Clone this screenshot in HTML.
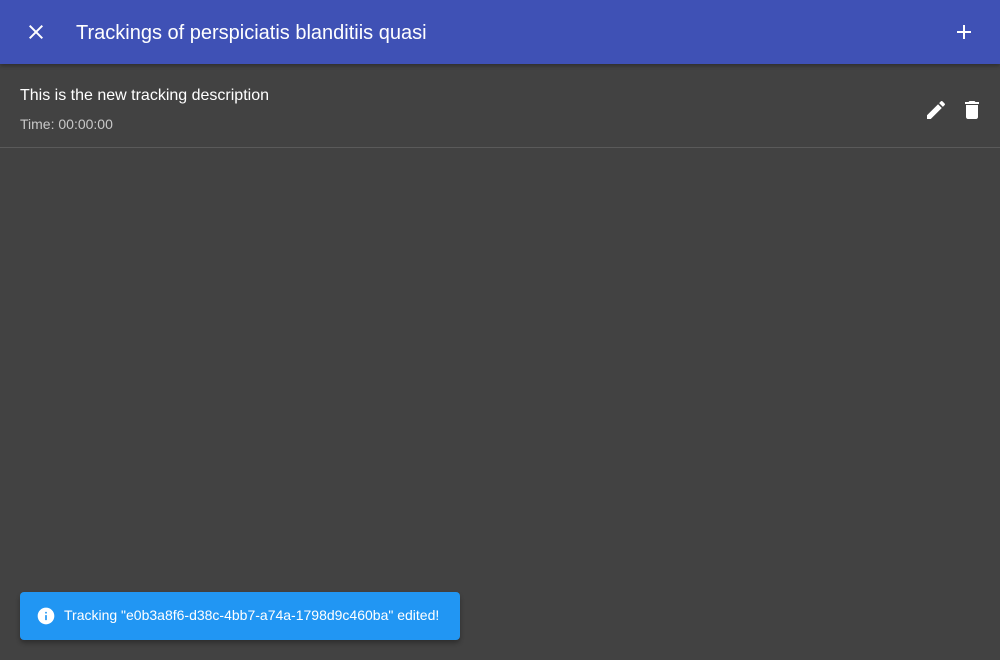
<!DOCTYPE html>
<html><head><meta charset="utf-8"><style>
*{margin:0;padding:0;box-sizing:border-box}
body{width:1000px;height:660px;background:#424242;font-family:"Liberation Sans",sans-serif;position:relative;overflow:hidden;color:#fff}
.bar{position:absolute;left:0;top:0;width:1000px;height:64px;background:#3f51b5;box-shadow:0 2px 4px rgba(0,0,0,.3);z-index:2}
.bar .t{position:absolute;left:76px;top:22px;font-size:20px}
.row{position:absolute;top:64px;left:0;width:1000px;height:84px;border-bottom:1px solid #5a5a5a}
.d{position:absolute;left:20px;top:23px;font-size:16px}
.tm{position:absolute;left:20px;top:52px;font-size:14px;color:#c8c8c8}
.snack{position:absolute;left:20px;top:592px;width:440px;height:48px;background:#2196f3;border-radius:4px;box-shadow:0 3px 5px rgba(0,0,0,.3);font-size:14px}
.snack span{position:absolute;left:44px;top:15px}
svg{position:absolute}
</style></head><body>
<div class="bar">
<svg style="left:24px;top:20px" width="24" height="24" viewBox="0 0 24 24"><path fill="#fff" d="M19 6.41L17.590 5 12 10.59 6.41 5 5 6.41 10.59 12 5 17.59 6.41 19 12 13.41 17.59 19 19 17.59 13.41 12z"/></svg>
<div class="t">Trackings of perspiciatis blanditiis quasi</div>
<svg style="left:952px;top:20px" width="24" height="24" viewBox="0 0 24 24"><path fill="#fff" d="M19 13h-6v6h-2v-6H5v-2h6V5h2v6h6v2z"/></svg>
</div>
<div class="row">
<div class="d">This is the new tracking description</div>
<div class="tm">Time: 00:00:00</div>
<svg style="left:924px;top:34px" width="24" height="24" viewBox="0 0 24 24"><path fill="#fff" d="M3 17.25V21h3.75L17.81 9.94l-3.75-3.75L3 17.25zM20.71 7.04a1 1 0 000-1.41l-2.34-2.34a1 1 0 00-1.410 0l-1.83 1.83 3.75 3.75 1.83-1.83z"/></svg>
<svg style="left:960px;top:34px" width="24" height="24" viewBox="0 0 24 24"><path fill="#fff" d="M6 19c0 1.1.9 2 2 2h8c1.1 0 2-.9 2-2V7H6v12zM19 4h-3.5l-1-1h-5l-1 1H5v2h14V4z"/></svg>
</div>
<div class="snack">
<svg style="left:16px;top:14px" width="20" height="20" viewBox="0 0 24 24"><path fill="#fff" d="M12 2C6.48 2 2 6.48 2 12s4.48 10 10 10 10-4.48 10-10S17.52 2 12 2zm1 15h-2v-6h2v6zm0-8h-2V7h2v2z"/></svg>
<span>Tracking "e0b3a8f6-d38c-4bb7-a74a-1798d9c460ba" edited!</span>
</div>
</body></html>
